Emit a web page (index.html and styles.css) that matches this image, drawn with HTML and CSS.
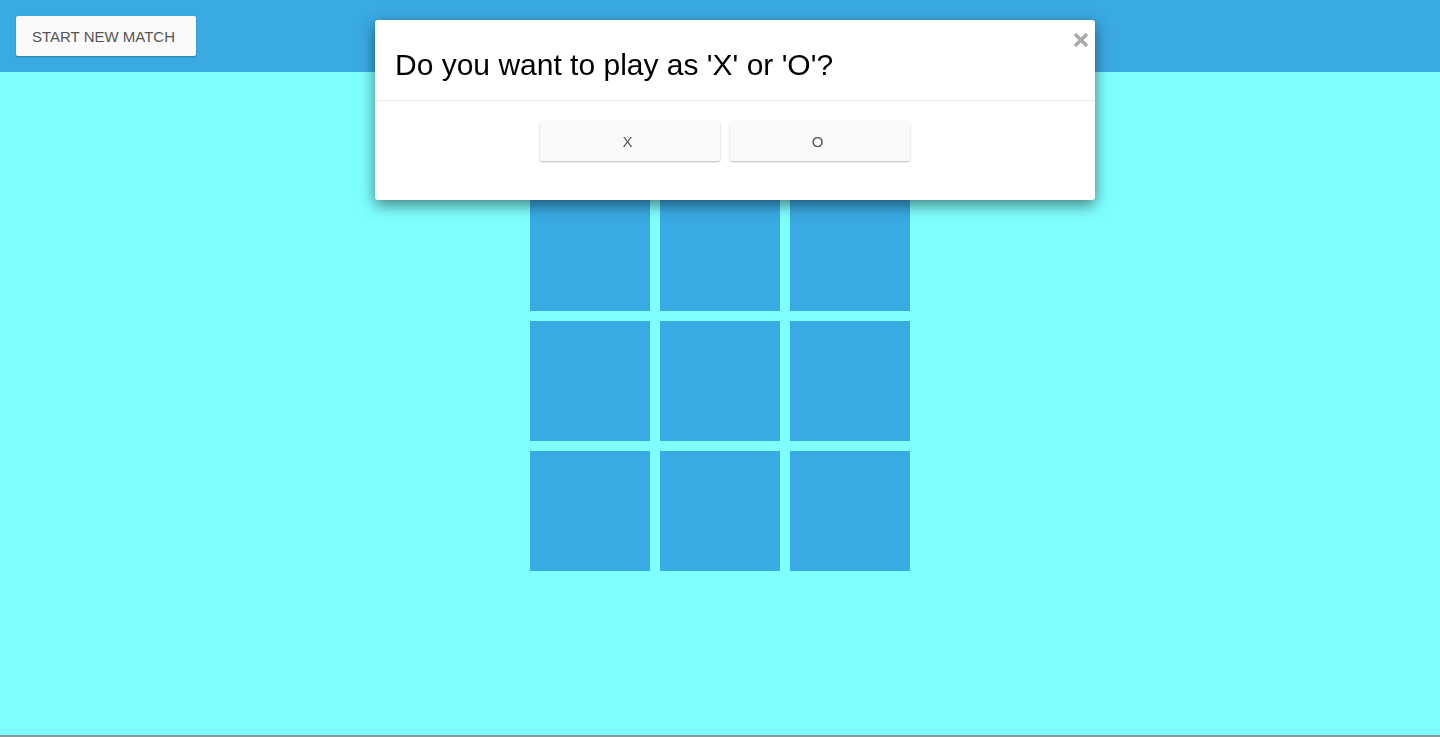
FILE: index.html
```html
<!DOCTYPE html>
<html>
<head>
<meta charset="utf-8">
<title>Tic Tac Toe</title>
<link rel="stylesheet" href="styles.css">
</head>
<body>
<div class="page">
  <header class="topbar">
    <button class="btn btn-new">Start New Match</button>
  </header>
  <main class="board-area">
    <div class="board">
      <div class="cell"></div><div class="cell"></div><div class="cell"></div>
      <div class="cell"></div><div class="cell"></div><div class="cell"></div>
      <div class="cell"></div><div class="cell"></div><div class="cell"></div>
    </div>
  </main>
  <div class="bottom-line"></div>
</div>
<div class="modal">
  <button class="modal-close" aria-label="Close">
    <svg width="16" height="16" viewBox="0 0 16 16"><path d="M2 2 L14 14 M14 2 L2 14" stroke="#a9a9a9" stroke-width="3.2" stroke-linecap="butt" fill="none"/></svg>
  </button>
  <div class="modal-header">
    <h2 class="modal-title">Do you want to play as 'X' or 'O'?</h2>
  </div>
  <div class="modal-body">
    <button class="btn btn-choice">X</button>
    <button class="btn btn-choice">O</button>
  </div>
</div>
</body>
</html>
```
FILE: styles.css
```css
html, body {
  margin: 0;
  padding: 0;
  height: 100%;
}
body {
  font-family: "Liberation Sans", Arial, sans-serif;
  background: #80ffff;
}
.page {
  display: flex;
  flex-direction: column;
  height: 100vh;
}
.topbar {
  height: 72px;
  box-sizing: border-box;
  padding: 16px;
  background: #3aaae3;
  display: flex;
  align-items: flex-start;
}
.btn {
  font-family: "Liberation Sans", Arial, sans-serif;
  border: none;
  background: #fafafa;
  color: #555;
  font-size: 15px;
  border-radius: 2px;
  box-shadow: 0 1px 2px rgba(0,0,0,0.28);
  cursor: pointer;
}
.btn-new {
  width: 180px;
  height: 40px;
  text-transform: uppercase;
  padding: 0 5px 0 0;
}
.board-area {
  flex: 1;
  display: flex;
  justify-content: center;
  padding-top: 119px;
}
.board {
  display: grid;
  grid-template-columns: repeat(3, 120px);
  grid-auto-rows: 120px;
  gap: 10px;
  align-content: start;
}
.cell {
  background: #3aaae3;
}
.bottom-line {
  height: 2px;
  background: #8a9a9a;
}
.modal {
  position: fixed;
  top: 20px;
  left: 375px;
  width: 720px;
  background: #fff;
  border-radius: 3px;
  box-shadow: 0 5px 15px rgba(0,0,0,0.5);
}
.modal-close {
  position: absolute;
  top: 12px;
  right: 6px;
  border: none;
  background: none;
  padding: 0;
  width: 16px;
  height: 16px;
  display: flex;
  cursor: pointer;
}
.modal-header {
  height: 81px;
  box-sizing: border-box;
  border-bottom: 1px solid #e8e8e8;
  padding: 29px 20px 0 20px;
}
.modal-title {
  margin: 0;
  font-weight: normal;
  font-size: 30px;
  line-height: 32px;
  color: #000;
}
.modal-body {
  display: flex;
  justify-content: center;
  gap: 10px;
  padding: 20px 20px 39px 0;
}
.btn-choice {
  width: 180px;
  height: 40px;
  padding: 0 5px 0 0;
}
```
